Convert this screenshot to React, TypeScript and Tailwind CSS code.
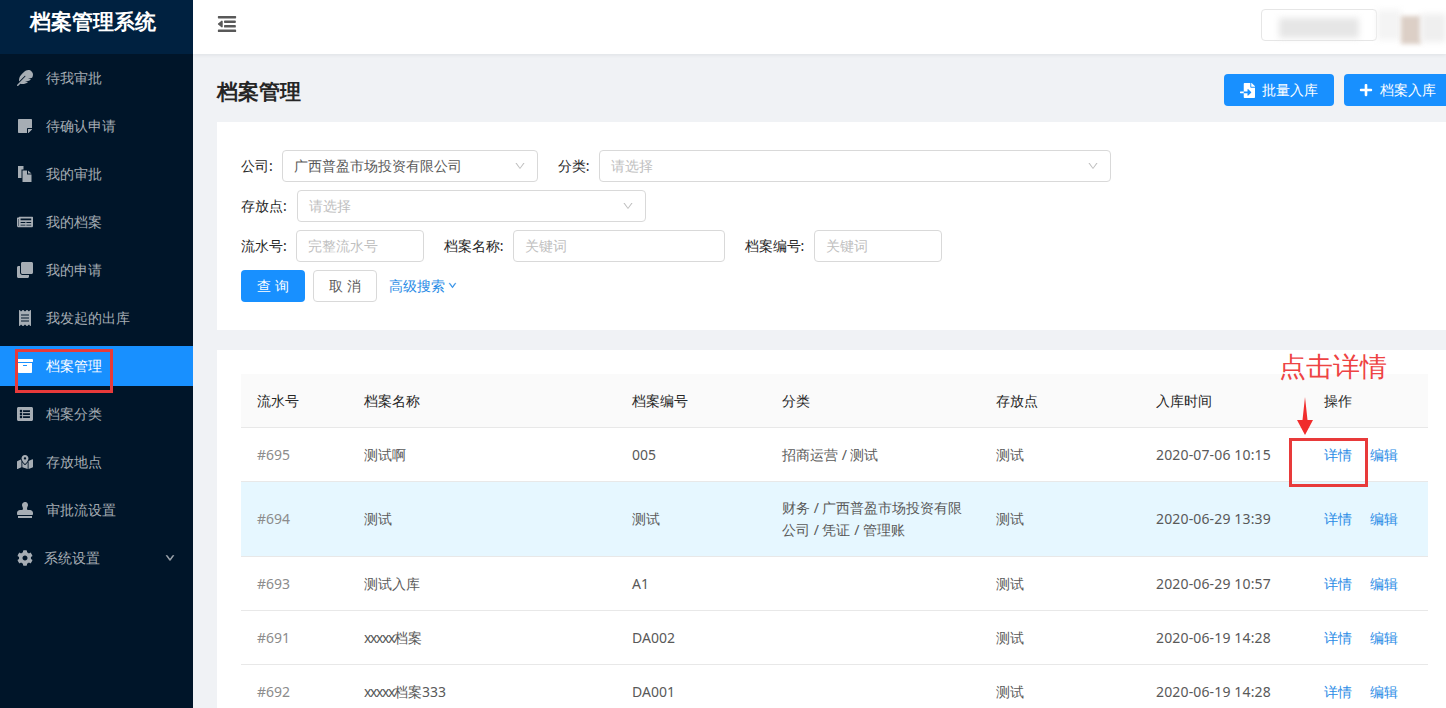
import { AiOutlineDown, AiOutlineMenuFold } from "react-icons/ai";
import {
  FaArchive,
  FaClone,
  FaCog,
  FaFeather,
  FaFileImport,
  FaListAlt,
  FaMapMarkedAlt,
  FaNewspaper,
  FaPlus,
  FaReceipt,
  FaStamp,
  FaStickyNote,
} from "react-icons/fa";

const FilesIcon = ({ className }: { className?: string }) => (
  <svg className={className} width="16" height="16" viewBox="0 0 16 16" fill="currentColor">
    <path d="M1 0 H6.5 V3.5 H4.5 V12 H1 Z" />
    <path d="M5.5 4.5 H10 V8.5 H14.5 V16 H5.5 Z" />
    <path d="M11 4.5 L14.5 7.5 H11 Z" />
  </svg>
);

const menu = [
  { label: "待我审批", icon: FaFeather },
  { label: "待确认申请", icon: FaStickyNote },
  { label: "我的审批", icon: FilesIcon },
  { label: "我的档案", icon: FaNewspaper },
  { label: "我的申请", icon: FaClone },
  { label: "我发起的出库", icon: FaReceipt },
  { label: "档案管理", icon: FaArchive, active: true },
  { label: "档案分类", icon: FaListAlt },
  { label: "存放地点", icon: FaMapMarkedAlt },
  { label: "审批流设置", icon: FaStamp },
  { label: "系统设置", icon: FaCog, arrow: true },
];

const rows = [
  { id: "#695", name: "测试啊", code: "005", cat: "招商运营 / 测试", time: "2020-07-06 10:15", h: "h-[54px]" },
  { id: "#694", name: "测试", code: "测试", cat: "财务 / 广西普盈市场投资有限公司 / 凭证 / 管理账", time: "2020-06-29 13:39", h: "h-[75px]", hl: true },
  { id: "#693", name: "测试入库", code: "A1", cat: "", time: "2020-06-29 10:57", h: "h-[54px]" },
  { id: "#691", name: "档案", prefix: "xxxxx", code: "DA002", cat: "", time: "2020-06-19 14:28", h: "h-[54px]" },
  { id: "#692", name: "档案333", prefix: "xxxxx", code: "DA001", cat: "", time: "2020-06-19 14:28", h: "h-[54px]" },
];

const Field = ({ label, labelClass, className, value, placeholder, arrow }: { label: string; labelClass?: string; className: string; value?: string; placeholder?: string; arrow?: boolean }) => (
  <div className="flex items-center">
    <span className={`whitespace-nowrap pb-[2px] text-[14px] text-[#262626] ${labelClass ?? ""}`}>{label}:</span>
    <div className={`ml-[9px] flex h-8 items-center justify-between rounded border border-[#d9d9d9] bg-white px-[11px] text-[14px] ${className}`}>
      <span className={`pb-[2px] ${value ? "text-[#595959]" : "text-[#bfbfbf]"}`}>{value || placeholder}</span>
      {arrow && <AiOutlineDown className="text-[12px] text-[#bfbfbf]" />}
    </div>
  </div>
);

export default function App() {
  return (
    <div className="flex h-[708px] w-[1446px] overflow-hidden bg-[#f0f2f5] font-['Roboto','Noto_Sans_CJK_SC',sans-serif] text-[14px]">
      {/* Sidebar */}
      <aside className="w-[193px] shrink-0 bg-[#001529]">
        <div className="flex h-[54px] justify-center bg-[#002140] pr-[7px] pt-[7px] text-[21px] leading-[28px] font-bold text-white">档案管理系统</div>
        <nav className="pt-[4px]">
          {menu.map((m) => {
            const Icon = m.icon;
            return (
              <div key={m.label} className={`mb-2 flex h-10 items-center pl-[17px] pr-[18px] ${m.active ? "bg-[#1890ff] text-white" : "text-[#a6adb4]"}`}>
                <Icon className="w-[16px] shrink-0 text-[16px]" />
                <span className={`${m.arrow ? "ml-[11px]" : "ml-[13px]"} flex-1 pb-[2px]`}>{m.label}</span>
                {m.arrow && <AiOutlineDown className="stroke-[80] text-[10px]" />}
              </div>
            );
          })}
        </nav>
      </aside>

      {/* Main */}
      <div className="relative min-w-0 flex-1">
        <header className="flex h-[54px] items-start justify-between bg-white pl-[23px] pt-[13px] shadow-[0_1px_4px_rgba(0,21,41,0.08)]">
          <AiOutlineMenuFold className="stroke-[50] text-[22px] text-[#595959]" />
          <div className="-mt-[7px] flex items-center">
            <div className="flex h-[32px] w-[116px] items-center justify-center rounded border border-[#e6e6e6]">
              <div className="mt-[6px] h-[20px] w-[80px] bg-[#e6e6e6] blur-[3px]" />
            </div>
            <div className="h-[30px] w-[24px] bg-[#f4f4f4] blur-[3px]" />
            <div className="mt-[10px] h-[28px] w-[20px] bg-[#dccfc6] blur-[2px]" />
            <div className="mt-[6px] h-[28px] w-[25px] bg-[#efefef] blur-[3px]" />
          </div>
        </header>

        <main className="mt-[4px] w-[1259px] pl-6">
          <div className="flex h-[64px] items-center justify-between">
            <h1 className="mt-[4px] text-[21px] font-bold text-[#262626]">档案管理</h1>
            <div className="flex gap-[10px]">
              <button className="flex h-8 w-[110px] items-center gap-[7px] rounded bg-[#1890ff] pl-4 text-[14px] text-white">
                <FaFileImport className="text-[15px]" />
                <span className="pb-[2px]">批量入库</span>
              </button>
              <button className="flex h-8 w-[108px] items-center gap-[7px] rounded bg-[#1890ff] pl-[15px] text-[14px] text-white">
                <FaPlus className="text-[14px]" />
                <span className="pb-[2px]">档案入库</span>
              </button>
            </div>
          </div>

          {/* Filter card */}
          <section className="h-[208px] bg-white pl-6 pt-[24px]">
            <div className="flex h-[40px] gap-5">
              <Field label="公司" className="w-[256px]" value="广西普盈市场投资有限公司" arrow />
              <Field label="分类" className="w-[512px]" placeholder="请选择" arrow />
            </div>
            <div className="flex h-[40px]">
              <Field label="存放点" labelClass="pr-px" className="w-[349px]" placeholder="请选择" arrow />
            </div>
            <div className="flex h-[40px] gap-5">
              <Field label="流水号" className="w-[128px]" placeholder="完整流水号" />
              <Field label="档案名称" className="w-[212px]" placeholder="关键词" />
              <Field label="档案编号" labelClass="pr-px" className="w-[128px]" placeholder="关键词" />
            </div>
            <div className="mt-1 flex items-center">
              <button className="h-8 w-16 rounded bg-[#1890ff] pb-[2px] text-white">查 询</button>
              <button className="ml-2 h-8 w-16 rounded border border-[#d9d9d9] pb-[2px] text-[#595959]">取 消</button>
              <span className="ml-3 flex items-center gap-[3px] pb-[2px] text-[#2b8ce6]">
                高级搜索
                <AiOutlineDown className="stroke-[60] text-[9px]" />
              </span>
            </div>
          </section>

          {/* Table card */}
          <section className="mt-5 bg-white pl-6 pr-6 pt-6">
            <table className="w-[1187px] table-fixed border-collapse">
              <colgroup>
                <col className="w-[107px]" />
                <col className="w-[268px]" />
                <col className="w-[150px]" />
                <col className="w-[214px]" />
                <col className="w-[160px]" />
                <col className="w-[168px]" />
                <col className="w-[120px]" />
              </colgroup>
              <thead>
                <tr className="h-[53px] border-b border-[#e8e8e8] bg-[#fafafa] text-left text-[#262626]">
                  {["流水号", "档案名称", "档案编号", "分类", "存放点", "入库时间", "操作"].map((h) => (
                    <th key={h} className="px-4 font-normal">{h}</th>
                  ))}
                </tr>
              </thead>
              <tbody>
                {rows.map((r) => (
                  <tr key={r.id} className={`${r.h} border-b border-[#e8e8e8] text-[#595959] ${r.hl ? "bg-[#e6f7ff]" : ""}`}>
                    <td className="px-4 text-[#8c8c8c]">{r.id}</td>
                    <td className="px-4">
                      {r.prefix && <span className="tracking-[-1.4px]">{r.prefix}</span>}
                      {r.name}
                    </td>
                    <td className="px-4">{r.code}</td>
                    <td className={`px-4 ${r.hl ? "leading-[22px]" : ""}`}>{r.cat}</td>
                    <td className="px-4">测试</td>
                    <td className="px-4 tracking-[0.15px]">{r.time}</td>
                    <td className="px-4 text-[#2b8ce6]">
                      <span className="mr-[18px]">详情</span>
                      <span>编辑</span>
                    </td>
                  </tr>
                ))}
              </tbody>
            </table>
          </section>
        </main>

        {/* Red annotations drawn over the screenshot */}
        <div className="absolute left-[-178px] top-[349px] h-[44px] w-[98px] border-[3px] border-[#e83a3a]" />
        <div className="absolute left-[1096px] top-[438px] h-[49px] w-[79px] border-[3px] border-[#e83a3a]" />
        <div className="absolute left-[1086px] top-[347px] text-[27px] leading-[38px] text-[#ee4343]">点击详情</div>
        <svg className="absolute left-[1104px] top-[397px]" width="16" height="38" viewBox="0 0 16 38">
          <path d="M8 0 L10.5 23 L16 23 L8 38 L0 23 L5.5 23 Z" fill="#f02d2d" />
        </svg>
      </div>
    </div>
  );
}
